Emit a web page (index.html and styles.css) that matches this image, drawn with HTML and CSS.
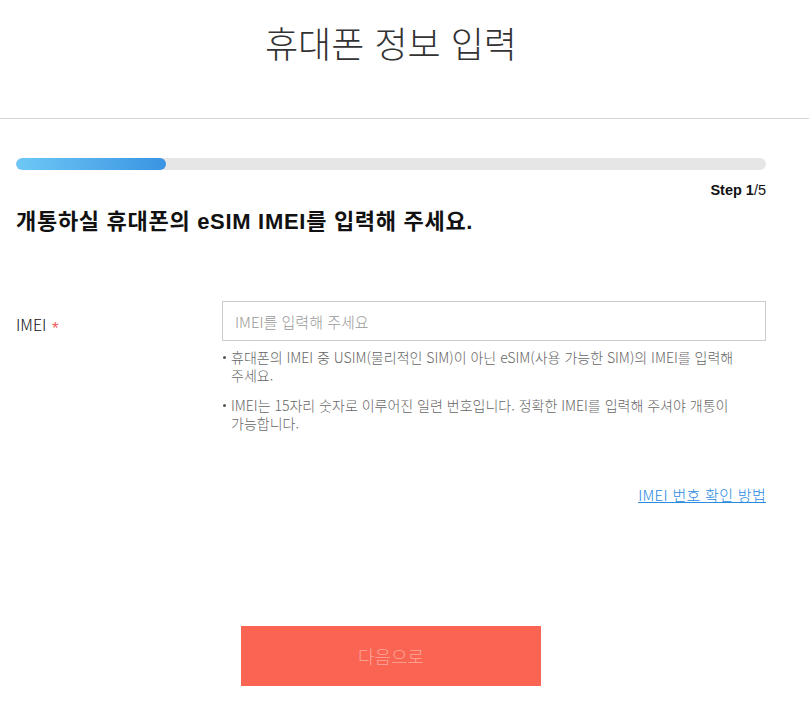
FILE: index.html
```html
<!DOCTYPE html>
<html lang="ko">
<head>
  <meta charset="UTF-8">
  <meta name="viewport" content="width=device-width, initial-scale=1.0">
  <title>휴대폰 정보 입력</title>
  <link rel="stylesheet" href="styles.css">
</head>
<body>
  <header class="top">
    <h1>휴대폰 정보 입력</h1>
  </header>

  <section class="content">
    <div class="progress"><span class="bar" style="width:20%"></span></div>
    <p class="step"><b>Step 1</b>/5</p>
    <h2>개통하실 휴대폰의 eSIM IMEI를 입력해 주세요.</h2>

    <div class="form-row">
      <label class="label" for="imei">IMEI <em>*</em></label>
      <div class="field">
        <input type="text" id="imei" placeholder="IMEI를 입력해 주세요">
        <ul class="notice">
          <li>휴대폰의 IMEI 중 USIM(물리적인 SIM)이 아닌 eSIM(사용 가능한 SIM)의 IMEI를 입력해 주세요.</li>
          <li>IMEI는 15자리 숫자로 이루어진 일련 번호입니다. 정확한 IMEI를 입력해 주셔야 개통이 가능합니다.</li>
        </ul>
      </div>
    </div>

    <div class="link-row"><a href="#">IMEI 번호 확인 방법</a></div>

    <div class="btn-area">
      <button type="button" class="btn-next">다음으로</button>
    </div>
  </section>
</body>
</html>
```

FILE: styles.css
```css
* {margin:0; padding:0; box-sizing:border-box;}
body{
  font-family:"Liberation Sans", "Noto Sans CJK KR", sans-serif;
  color:#111;
  background:#fff;
}
.top{
  height:119px;
  border-bottom:1px solid #d6d6d6;
  padding-top:20px;
}
.top h1{
  width:750px;
  margin-left:16px;
  text-align:center;
  font-family:"Noto Sans CJK KR", sans-serif;
  font-weight:300;
  font-size:36px;
  line-height:44px;
  color:#333;
}
.content{
  width:750px;
  margin-left:16px;
  padding-top:39px;
}
.progress{
  height:12px;
  background:#e6e6e6;
  border-radius:6px;
  overflow:hidden;
}
.progress .bar{
  display:block;
  height:100%;
  border-radius:6px;
  background:linear-gradient(to right, #6ec8f5, #3a94e2);
}
.step{
  text-align:right;
  font-size:14.5px;
  line-height:16px;
  margin-top:12px;
  color:#111;
}
.step b{font-weight:bold;}
h2{
  font-size:22px;
  font-weight:bold;
  line-height:26px;
  margin-top:11px;
  letter-spacing:0.7px;
}
.form-row{
  display:flex;
  margin-top:66px;
}
.label{
  width:206px;
  font-size:16px;
  padding-top:11px;
  font-family:"Noto Sans CJK KR", sans-serif;
  font-weight:300;
  color:#111;
}
.label em{
  font-style:normal;
  font-family:"Liberation Sans", sans-serif;
  color:#f25a5a;
  font-size:17px;
  vertical-align:-3px;
  margin-left:1px;
}
.field{flex:1;}
.field input{
  display:block;
  width:100%;
  height:40px;
  border:1px solid #ccc;
  padding:0 12px;
  font-family:"Noto Sans CJK KR", sans-serif;
  font-weight:300;
  font-size:15px;
  color:#333;
  outline:none;
}
.field input::placeholder{color:#999;}
.notice{
  list-style:none;
  margin-top:7px;
  padding-right:10px;
}
.notice li{
  position:relative;
  padding-left:9px;
  font-family:"Noto Sans CJK KR", sans-serif;
  font-weight:300;
  font-size:14px;
  line-height:18px;
  color:#666;
  margin-bottom:12px;
  word-break:keep-all;
}
.notice li::before{
  content:"";
  position:absolute;
  left:1px; top:8px;
  width:3px; height:3px;
  border-radius:50%;
  background:#555;
}
.link-row{
  text-align:right;
  margin-top:40px;
}
.link-row a{
  font-family:"Noto Sans CJK KR", sans-serif;
  font-weight:300;
  font-size:15px;
  letter-spacing:0.3px;
  color:#2a8ae0;
  text-decoration:underline;
}
.btn-area{
  text-align:center;
  margin-top:121px;
}
.btn-next{
  width:300px;
  height:60px;
  border:0;
  background:#fa6453;
  color:#fca498;
  font-family:"Noto Sans CJK KR", sans-serif;
  font-weight:300;
  font-size:18px;
}
```
